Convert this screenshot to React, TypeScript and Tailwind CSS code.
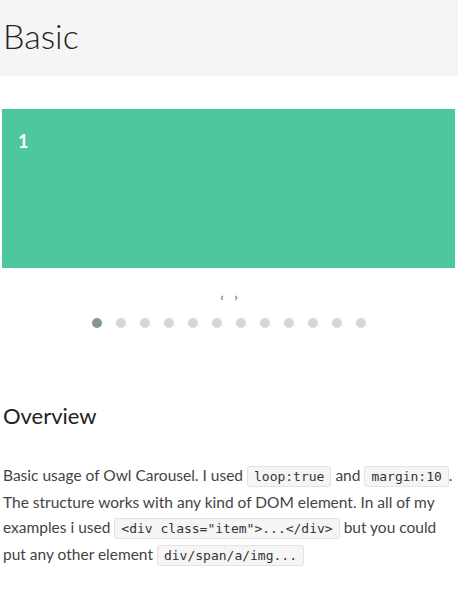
import React from 'react'

const DOTS = Array.from({ length: 12 }, (_, i) => i)

const Code = ({ children }: { children: React.ReactNode }) => (
  <code className="whitespace-nowrap rounded-[3px] border border-[#e3e3e3] bg-[#f5f5f5] px-[6px] py-[2px] font-['DejaVu_Sans_Mono',monospace] text-[13px] text-[#333]">
    {children}
  </code>
)

const App = () => {
  return (
    <div className="min-h-[589px] bg-white font-['Lato',sans-serif] text-[#444]">
      <header className="flex h-[76px] items-center bg-[#f5f5f5] px-[3px]">
        <h1 className="pb-[5px] text-[34px] font-light leading-none text-[#222]">Basic</h1>
      </header>

      <section className="mt-[33px]">
        <div className="ml-[2px] mr-[3px] h-[159px] bg-[#4dc7a0] px-4 pt-[16px]">
          <h4 className="text-[18px] font-bold leading-[32px] text-white">1</h4>
        </div>
        <div className="mt-[23px] flex justify-center gap-[11px] text-[11px] leading-none text-[#333]">
          <button type="button">‹</button>
          <button type="button">›</button>
        </div>
        <div className="mt-[16px] flex justify-center">
          {DOTS.map((i) => (
            <span
              key={i}
              className={
                i === 0
                  ? 'mx-[7px] h-[10px] w-[10px] rounded-full bg-[#869791]'
                  : 'mx-[7px] h-[10px] w-[10px] rounded-full bg-[#d6d6d6]'
              }
            />
          ))}
        </div>
      </section>

      <section className="mt-[77px] px-[3px]">
        <h3 className="text-[22px] font-normal leading-none text-[#222]">Overview</h3>
        <p className="mt-[36px] text-[15.5px] leading-[25.6px] text-[#444]">
          Basic usage of Owl Carousel. I used <Code>loop:true</Code> and <Code>margin:10</Code>. The
          structure works with any kind of DOM element. In all of my examples i used{' '}
          <Code>{'<div class="item">...</div>'}</Code> but you could put any other element{' '}
          <Code>div/span/a/img...</Code>
        </p>
      </section>
    </div>
  )
}

export default App
